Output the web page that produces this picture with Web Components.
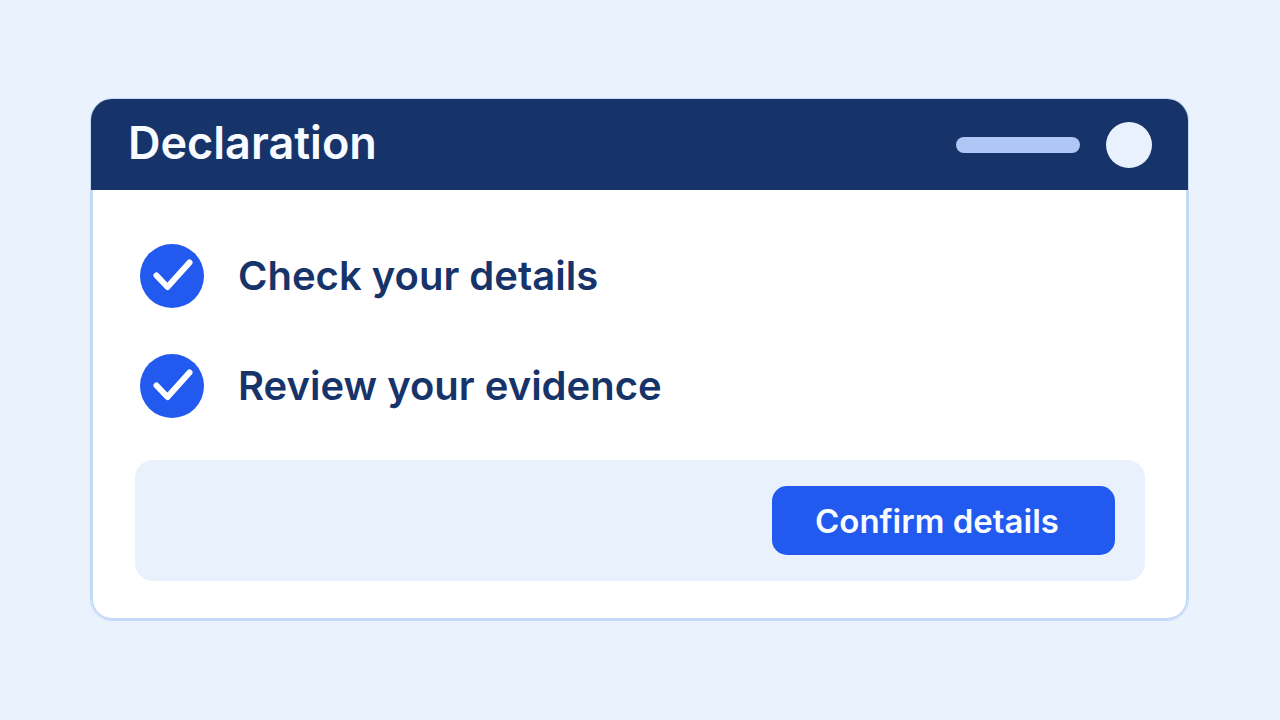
<!DOCTYPE html>
<html lang="en">
<head>
<meta charset="utf-8">
<meta name="viewport" content="width=device-width, initial-scale=1">
<title>Declaration</title>
<style>
  html { background: #eaf2fe; }
  body { margin: 0; font-family: Inter, "Liberation Sans", sans-serif; color: #17346a; }
</style>
</head>
<body>
<declaration-card>
  <card-header slot="header">Declaration</card-header>
  <check-item>Check your details</check-item>
  <check-item>Review your evidence</check-item>
  <action-panel slot="actions"><action-button>Confirm details</action-button></action-panel>
</declaration-card>
<script>
  const define = (name, html) => {
    const template = document.createElement('template');
    template.innerHTML = html;
    customElements.define(name, class extends HTMLElement {
      constructor() {
        super();
        this.attachShadow({ mode: 'open' }).append(template.content.cloneNode(true));
      }
    });
  };

  define('declaration-card', `
    <style>
      :host { display: block; padding: 98px 91px 96px 90px; }
      main { border: 1px solid #c3d9f5; border-radius: 22px; background: #fff; overflow: hidden; }
      .body { border: solid #c3d9f5; border-width: 0 2px 2px; border-radius: 0 0 21px 21px; padding: 54px 41px 37px 42px; }
      .list { display: grid; gap: 46px; padding: 0 5px; margin-bottom: 42px; }
    </style>
    <main>
      <slot name="header"></slot>
      <div class="body">
        <div class="list" role="list"><slot></slot></div>
        <slot name="actions"></slot>
      </div>
    </main>`);

  define('card-header', `
    <style>
      :host { display: block; }
      header { display: flex; align-items: center; gap: 26px; min-height: 91px; padding: 0 36px 0 37px; background: #17346a; color: #f8fbff; }
      h1 { flex: 1; margin: 0; font-size: 45px; line-height: 56px; font-weight: 600; padding-bottom: 4px; }
      .line { width: 124px; height: 16px; border-radius: 8px; background: #b0c6f5; }
      .avatar { width: 46px; height: 46px; border-radius: 50%; background: #e9f0fe; }
    </style>
    <header>
      <h1><slot></slot></h1>
      <span class="line"></span>
      <span class="avatar"></span>
    </header>`);

  define('check-item', `
    <style>
      :host { display: block; }
      div { display: flex; align-items: center; gap: 34px; font-size: 40px; line-height: 52px; font-weight: 600; }
      svg { flex: none; display: block; width: 64px; height: 64px; }
    </style>
    <div role="listitem">
      <svg viewBox="0 0 64 64" aria-hidden="true">
        <circle cx="32" cy="32" r="32" fill="#2259ef"/>
        <path d="M16.500 31.500 27.500 43 49.500 18.500" fill="none" stroke="#fff" stroke-width="6" stroke-linecap="round" stroke-linejoin="round"/>
      </svg>
      <span><slot></slot></span>
    </div>`);

  define('action-panel', `
    <style>
      :host { display: flex; justify-content: flex-end; padding: 26px 30px; border-radius: 18px; background: #e9f1fd; }
    </style>
    <slot></slot>`);

  define('action-button', `
    <style>
      :host { display: block; }
      button { display: block; box-sizing: border-box; min-width: 343px; min-height: 69px; margin: 0; border: 0; border-radius: 15px; padding: 0 43px; background: #2259ef; color: #f8fbff; font: inherit; font-size: 33px; line-height: 42px; font-weight: 600; text-align: left; white-space: nowrap; cursor: pointer; }
    </style>
    <button type="button"><slot></slot></button>`);
</script>
</body>
</html>
